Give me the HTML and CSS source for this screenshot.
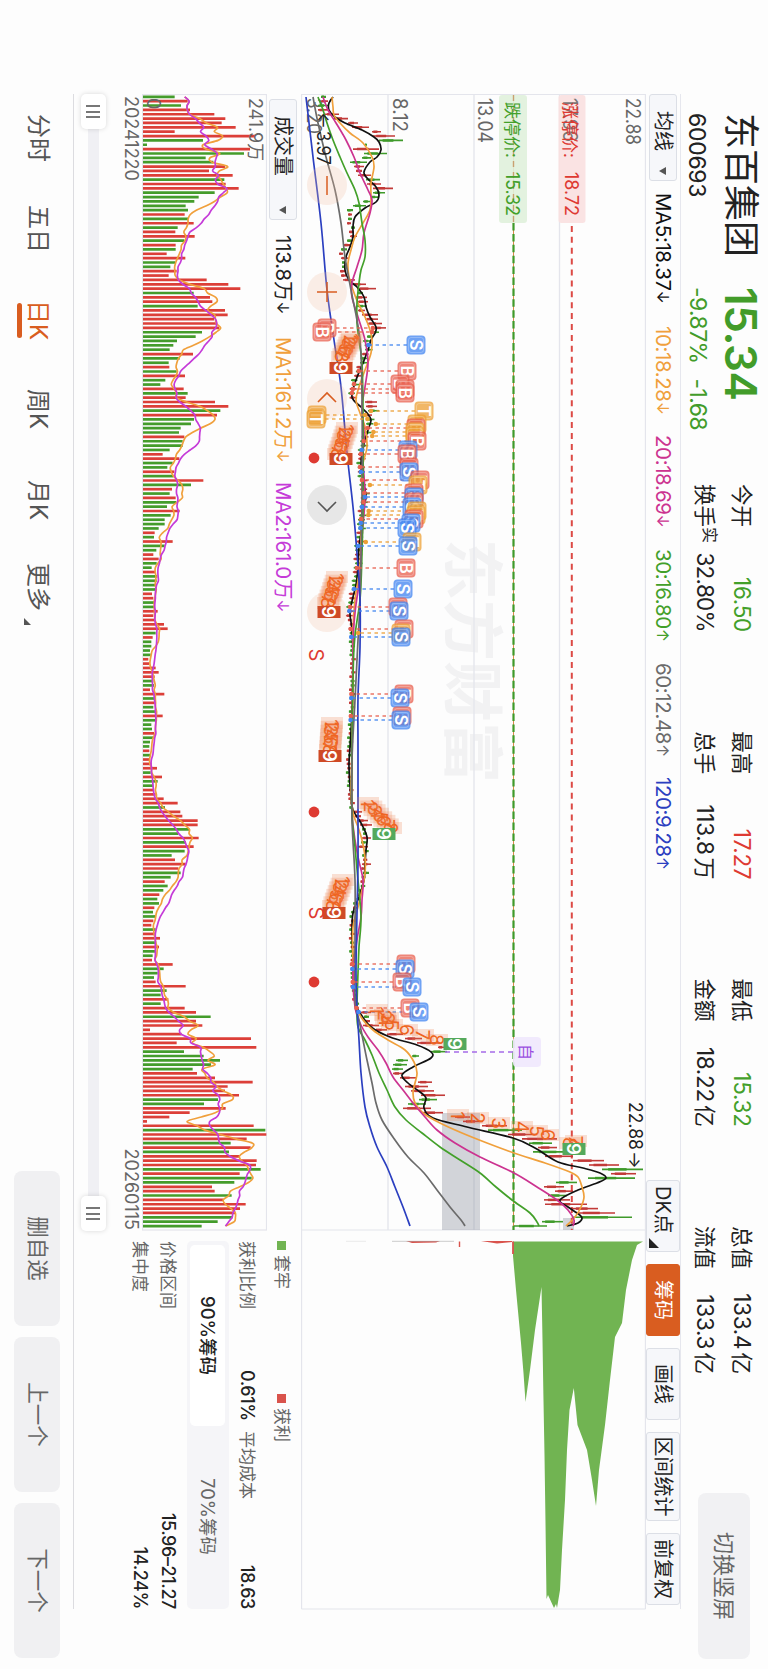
FILE: index.html
```html
<!DOCTYPE html>
<html lang="zh-CN">
<head>
  <meta charset="UTF-8" />
  <meta name="viewport" content="width=device-width, initial-scale=1.0"/>
  <title>东百集团 600693</title>
  <link rel="stylesheet" href="styles.css">
</head>
<body>
  <div class="stage">
    <header class="quote">
      <div class="name">
        <h1>东百集团</h1>
        <span class="code">600693</span>
      </div>
      <div class="price">
        <strong>15.34</strong>
        <span class="change"><i>-9.87%</i><i>-1.68</i></span>
      </div>
      <div class="stats">
        <div class="stat"><label>今开</label><b class="down">16.50</b></div>
        <div class="stat"><label>最高</label><b class="up">17.27</b></div>
        <div class="stat"><label>最低</label><b class="down">15.32</b></div>
        <div class="stat"><label>总值</label><b>133.4<i>亿</i></b></div>
        <div class="stat"><label>换手<sup>实</sup></label><b class="raised">32.80%</b></div>
        <div class="stat"><label>总手</label><b>113.8<i>万</i></b></div>
        <div class="stat"><label>金额</label><b>18.22<i>亿</i></b></div>
        <div class="stat"><label>流值</label><b>133.3<i>亿</i></b></div>
      </div>
      <button class="btn-rotate">切换竖屏</button>
    </header>

    <div class="toolbar">
      <button class="select">均线<em></em></button>
      <div class="ma-list">
        <span class="ma5">MA5:18.37<i>↓</i></span>
        <span class="ma10">10:18.28<i>↓</i></span>
        <span class="ma20">20:18.69<i>↓</i></span>
        <span class="ma30">30:16.80<i>↑</i></span>
        <span class="ma60">60:12.48<i>↑</i></span>
        <span class="ma120">120:9.28<i>↑</i></span>
      </div>
      <div class="tools">
        <button class="dk">DK点</button>
        <button class="active">筹码</button>
        <button>画线</button>
        <button class="wide">区间统计</button>
        <button>前复权</button>
      </div>
    </div>

    <svg id="kline" class="kline" viewBox="94 122 1516 345"></svg>

    <div class="lower">
      <div class="volume">
        <div class="volume-head">
          <button class="select">成交量<em></em></button>
          <span class="vol">113.8万<i>↓</i></span>
          <span class="vma1">MA1:161.2万<i>↓</i></span>
          <span class="vma2">MA2:161.0万<i>↓</i></span>
        </div>
        <svg id="vol" class="vol-chart" viewBox="94 501 1137 125"></svg>
        <div class="dates"><span>20241220</span><span>20260115</span></div>
        <div class="slider">
          <span class="handle"><i></i><i></i><i></i></span>
          <span class="handle"><i></i><i></i><i></i></span>
        </div>
      </div>

      <aside class="chips">
        <div class="legend">
          <span><i class="sq green"></i>套牢</span>
          <span><i class="sq red"></i>获利</span>
        </div>
        <div class="chip-row two">
          <label>获利比例</label><b>0.61%</b>
          <label class="second">平均成本</label><b>18.63</b>
        </div>
        <div class="segment"><span class="on">90%筹码</span><span>70%筹码</span></div>
        <div class="chip-row"><label>价格区间</label><b>15.96–21.27</b></div>
        <div class="chip-row"><label>集中度</label><b>14.24%</b></div>
      </aside>
    </div>

    <footer class="bottom">
      <nav class="tabs">
        <span>分时</span>
        <span>五日</span>
        <span class="current">日K</span>
        <span>周K</span>
        <span>月K</span>
        <span class="more">更多</span>
      </nav>
      <div class="actions">
        <button>删自选</button>
        <button>上一个</button>
        <button>下一个</button>
      </div>
    </footer>
  </div>

  <script src="script.js"></script>
</body>
</html>
```

FILE: styles.css
```css
* {
  box-sizing: border-box;
  margin: 0;
  padding: 0;
}

html, body {
  width: 768px;
  height: 1669px;
  overflow: hidden;
  background: #fdfdfd;
}

body {
  font-family: Inter, 'Noto Sans CJK SC', sans-serif;
  line-height: 1;
  color: #222;
}

/* landscape screen turned a quarter clockwise */
.stage {
  width: 1669px;
  height: 768px;
  display: flex;
  flex-direction: column;
  transform-origin: 0 0;
  transform: translateX(768px) rotate(90deg);
  white-space: nowrap;
}

button {
  font: inherit;
  color: inherit;
  border: none;
  background: none;
  line-height: 1;
  white-space: nowrap;
}

i, em {
  font-style: normal;
}

/* header */
.quote {
  height: 87px;
  display: flex;
  padding-left: 113px;
}

.name {
  width: 174px;
  padding-top: 9px;
}

h1 {
  font-size: 36px;
  font-weight: 400;
  height: 51px;
  line-height: 36px;
}

.code {
  display: block;
  font-size: 23px;
  letter-spacing: -0.3px;
}

.price {
  width: 197px;
  color: #429c2a;
  padding-top: 5px;
}

.price strong {
  display: block;
  font-size: 44px;
  font-weight: 600;
  height: 54px;
  letter-spacing: -0.4px;
}

.change {
  display: flex;
  gap: 15px;
  font-size: 23px;
  letter-spacing: -0.6px;
}

.stats {
  width: 1009px;
  display: grid;
  grid-template-columns: repeat(4, 148px);
  column-gap: 99.3px;
  grid-template-rows: 37px 37px;
  padding-top: 8px;
}

.stat {
  display: flex;
  justify-content: space-between;
  align-items: center;
  font-size: 21.5px;
}

.stat b {
  font-weight: 400;
  font-size: 22.5px;
  letter-spacing: -0.3px;
}

.stat b i {
  font-size: 22px;
  margin-left: 3px;
}

.stat b.raised {
  letter-spacing: -0.7px;
}

.stat sup {
  display: inline-block;
  font-size: 16px;
  vertical-align: 7px;
  line-height: 0;
}

.up { color: #de3a32; }
.down { color: #43a02a; }

.btn-rotate {
  width: 166px;
  height: 52px;
  margin-top: 18px;
  border-radius: 8px;
  background: #f1f1f3;
  color: #666;
  font-size: 22px;
}

/* indicator row */
.toolbar {
  height: 35px;
  width: 1515px;
  margin-left: 94px;
  border-top: 1px solid #e6e7ee;
  display: flex;
  align-items: center;
}

.select {
  display: flex;
  align-items: center;
  justify-content: space-between;
  height: 28px;
  width: 87px;
  padding: 0 5px 0 16px;
  border: 1px solid #dcdfe6;
  border-radius: 3px;
  background: #f6f7fa;
  font-size: 20px;
}

.select em {
  border: 4px solid transparent;
  border-top: 7px solid #555;
  border-bottom: none;
}

.ma-list {
  margin-left: 12px;
  flex: 1;
  display: grid;
  grid-template-columns: 133px 109px 114px 114px 114px auto;
  font-size: 20.5px;
  letter-spacing: -0.4px;
}

.ma-list i,
.volume-head i {
  font-size: 16px;
  vertical-align: 1px;
}

.ma5 { color: #111; }
.ma10 { color: #f0a03c; }
.ma20 { color: #cc3390; }
.ma30 { color: #43a02a; }
.ma60 { color: #6b6b6b; }
.ma120 { color: #2b3fc0; }

.tools {
  display: flex;
  gap: 12px;
  margin-right: 4px;
}

.tools button {
  position: relative;
  width: 72px;
  height: 34px;
  font-size: 20px;
  border: 1px solid #dcdfe6;
  border-radius: 3px;
  background: #f6f7fa;
}

.tools button.wide { width: 89px; }

.tools button.active {
  background: #d95d20;
  border-color: #d95d20;
  color: #fff;
}

.tools .dk {
  text-align: left;
  padding-left: 5px;
}

.tools .dk::after {
  content: '';
  position: absolute;
  right: 3px;
  bottom: 2px;
  border-left: 10px solid transparent;
  border-bottom: 10px solid #222;
}

.kline {
  display: block;
  width: 1516px;
  height: 345px;
  margin-left: 94px;
  flex: none;
}

/* volume + chip summary */
.lower {
  height: 228px;
  width: 1515px;
  margin-left: 94px;
  border-bottom: 1px solid #dcdce0;
  display: flex;
}

.volume { width: 1137px; }

.volume-head {
  height: 34px;
  display: flex;
  align-items: center;
  padding: 4px 0 2px 5px;
  font-size: 20.5px;
  letter-spacing: -0.2px;
}

.volume-head .select {
  width: 121px;
  padding-right: 5px;
  font-size: 20px;
  letter-spacing: 0;
}

.vol { margin-left: 15px; width: 102px; }
.vma1 { width: 145px; color: #f0a03c; }
.vma2 { color: #c53bd8; }

.vol-chart {
  display: block;
  width: 1137px;
  height: 125px;
}

.dates {
  display: flex;
  justify-content: space-between;
  font-size: 18px;
  color: #666;
  padding: 2px 1px 0 2px;
  height: 36px;
}

.slider {
  display: flex;
  justify-content: space-between;
  align-items: center;
  height: 25px;
  background: linear-gradient(#f0f0f4, #f0f0f4) 0 50% / 100% 11px no-repeat;
}

.handle {
  width: 35px;
  height: 25px;
  border-radius: 5px;
  background: #fff;
  box-shadow: 0 0 5px rgba(0, 0, 0, 0.15);
  display: flex;
  justify-content: center;
  align-items: center;
  gap: 3.5px;
}

.handle i {
  width: 2px;
  height: 14px;
  background: #777;
}

.chips {
  width: 378px;
  padding-left: 10px;
  font-size: 17px;
  color: #666;
}

.legend {
  display: flex;
  align-items: center;
  margin-top: 9px;
  height: 20px;
}

.legend span {
  display: flex;
  align-items: center;
  gap: 5px;
  width: 153px;
}

.sq {
  width: 9px;
  height: 9px;
}

.sq.green { background: #71b452; }
.sq.red { background: #d9534c; }

.chip-row {
  display: flex;
  justify-content: space-between;
  align-items: center;
  height: 28px;
}

.chip-row b {
  color: #222;
  font-weight: 500;
  font-size: 18px;
  letter-spacing: -0.4px;
}

.chip-row.two {
  height: 20px;
  margin: 15px 0 8px;
  display: grid;
  grid-template-columns: 129px 61px auto 1fr;
}

.chip-row.two b:last-child { text-align: right; }

.segment {
  display: flex;
  height: 42px;
  padding: 4px 2px 3px 4px;
  margin-bottom: 5px;
  border-radius: 5px;
  background: #f5f5f8;
  font-size: 18.5px;
}

.segment span {
  flex: 1;
  display: flex;
  align-items: center;
  justify-content: center;
}

.segment .on {
  background: #fff;
  color: #222;
  font-weight: 500;
  border-radius: 5px;
}

/* period tabs */
.bottom {
  height: 73px;
  display: flex;
  padding: 13px 11px 0 114px;
  justify-content: space-between;
}

.tabs {
  display: grid;
  grid-template-columns: 91px 95px 89px 91px 83px auto;
  font-size: 24px;
  line-height: 44px;
  height: 46px;
  color: #555;
}

.tabs span { position: relative; }

.tabs .current { color: #d95d20; }

.tabs .current::after {
  content: '';
  position: absolute;
  left: 3px;
  bottom: 3px;
  width: 35px;
  height: 5px;
  border-radius: 3px;
  background: #d95d20;
}

.tabs .more::after {
  content: '';
  position: absolute;
  right: -14px;
  bottom: 10px;
  border-left: 7px solid transparent;
  border-bottom: 7px solid #555;
}

.actions {
  display: flex;
  gap: 11px;
}

.actions button {
  width: 155px;
  height: 46px;
  border-radius: 8px;
  background: #f0f0f2;
  color: #666;
  font-size: 21.5px;
}
```

FILE: script.js
```js
const X0 = 96.8;      // centre of the first bar
const STEP = 4.36;    // distance between bars
const RED = '#c23a38';
const GREEN = '#3f9a2a';

// price level in px above the bottom edge of the screen -> svg y
const Y = v => 768 - v;
const barX = i => X0 + i * STEP;

// volume per day, g = falling day, r = rising day
const volumes = (
  '134g 173r 153g 180r 253r 286r 275r 317r 134r 375r 219g 51g 360r 342g 227g 250g 285r 237r 308r 283g 287r 326r 254g 206g 193g 167g 174g 164r 174g 191r ' +
  '143g 136r 194r 163g 137r 137g 110r 166r 136g 121g 140r 116r 230r 295r 331r 191g 240r 247r 203g 285r 293r 252r 262r 268r 216g 197g 141g 130g 119g 189r ' +
  '149g 116g 118r 140g 165r 106g 91g 161r 173g 167r 255r 295r 271g 261r 192g 183g 152g 147g 163r 158g 158g 119g 98r 148r 128g 112g 133r 130g 220r 183g ' +
  '126r 119g 137r 139g 111g 149r 122g 104g 104g 86g 74r 72g 128r 104g 79g 70r 86r 80g 65g 77r 82g 80g 75g 80g 66r 70r 72g 75g 83r 70r 75r ' +
  '102r 113r 77g 68r 64g 64g 60g 62g 55r 58r 77r 86r 74r 70g 72g 60r 103r 75g 74r 70g 77g 98r 76g 64g 66g 72r 70g 60g 58g 58r 60g 58r 65r 81r 62g 96r 83g 70g 70r 77r ' +
  '101r 143r 105g 151r 157r 203r 203r 178g 145g 206r 167g 191r 164g 125g 135r 167r 145r 152g 122g 104r 113g 100g 88r 82g 87g 73r 69g 75g 70r 64r 77g 75r 90r 79g 87r 75g 68g 66r 128r 101g ' +
  '83g 72g 77r 167r 110g 92g 115r 92g 164r 198r 242g 198r 217r 60r 155r 363r 140r 379r 162g 221g 270g 243g 188g 201r 255r 368r 293r 285r 327r 264g 222g 287r 179r 118r 51r 371r 406g 409r 350r 302g ' +
  '362r 297g 330r 380r 378r 392g 329r 365g 313g 246r 254r 305g 280r 347r 330r 317r 307g 263g 215g'
).split(' ').map(s => ({ h: (parseInt(s) - 39) / 3, up: s.endsWith('r') }));

// low / high of each day; the flat middle part follows the 5 day line
const ranges = {
  0: [321, 326], 1: [321, 328], 2: [318, 328], 3: [318, 328], 4: [325, 339], 5: [333, 348], 6: [348, 358], 7: [352, 369],
  8: [372, 381], 9: [373, 395], 10: [379, 403], 11: [365, 367], 12: [353, 379], 13: [364, 387], 14: [362, 371], 15: [350, 367],
  16: [354, 364], 17: [356, 362], 18: [358, 371], 19: [366, 380], 20: [367, 381], 21: [373, 393], 22: [373, 385], 23: [371, 378],
  24: [363, 371], 25: [353, 366], 26: [347, 353], 27: [348, 352], 28: [348, 352], 29: [347, 351], 30: [351, 355], 31: [349, 354],
  32: [350, 357], 33: [347, 353], 34: [344, 350], 35: [341, 347], 36: [339, 343], 37: [341, 348], 38: [342, 345], 39: [342, 345],
  40: [340, 345], 41: [341, 346], 42: [343, 355], 43: [352, 366], 44: [357, 376], 45: [358, 363], 46: [355, 367], 47: [357, 368],
  48: [357, 367], 49: [358, 365], 50: [362, 378], 51: [365, 378], 52: [367, 382], 53: [373, 386], 54: [372, 379], 55: [367, 373],
  56: [363, 371], 70: [365, 377], 71: [366, 377], 72: [368, 379], 73: [365, 372],
  164: [353, 362], 165: [355, 361], 166: [357, 368], 167: [360, 372], 168: [362, 366], 169: [363, 367], 170: [362, 371],
  171: [361, 367], 172: [358, 368], 176: [362, 371], 178: [363, 369],
  210: [361, 371], 211: [364, 369], 212: [364, 370], 213: [363, 379], 214: [374, 387], 215: [387, 403], 216: [405, 422],
  217: [417, 440], 218: [438, 445], 219: [431, 447], 220: [412, 419], 221: [396, 408], 222: [393, 407], 223: [392, 403],
  224: [393, 403], 225: [400, 416], 226: [418, 432], 227: [405, 428], 228: [411, 434], 229: [421, 445], 230: [419, 437],
  231: [408, 426], 232: [403, 431], 233: [423, 443], 234: [455, 470], 235: [463, 483], 236: [482, 507], 237: [488, 522],
  238: [508, 537], 239: [522, 557], 240: [529, 552], 241: [538, 557], 242: [533, 572], 243: [545, 573], 244: [573, 604],
  245: [589, 619], 246: [602, 643], 247: [611, 636], 248: [588, 635], 249: [556, 577], 250: [544, 564], 251: [555, 573],
  252: [548, 567], 253: [544, 570], 254: [545, 587], 255: [572, 598], 256: [577, 615], 257: [572, 632], 258: [542, 563], 259: [514, 547]
};

// moving averages as [x, level] knots
const ma5 = [[97,333],[103,329],[110,329],[117,335],[123,345],[130,362],[137,374],[142,379],[150,381],[157,377],[162,370],[172,364],[178,367],[187,376],[195,379],[202,376],[208,365],[217,355],[227,353],[237,353],[247,350],[257,346],[270,345],[280,349],[287,357],[297,364],[307,366],[317,370],[327,376],[333,375],[340,371],[350,368],[363,363],[380,356],[397,352],[407,361],[413,367],[420,371],[430,368],[440,365],[453,362],[467,361],[480,363],[497,366],[507,363],[520,362],[533,361],[547,359],[567,358],[585,356],[597,353],[613,350],[630,352],[663,353],[713,352],[747,350],[767,349],[797,351],[810,353],[823,361],[837,367],[850,366],[863,365],[880,364],[897,359],[913,353],[933,352],[960,353],[990,354],[1007,357],[1013,360],[1027,371],[1037,390],[1045,417],[1052,431],[1058,431],[1067,413],[1075,402],[1083,408],[1092,420],[1098,426],[1108,424],[1118,433],[1127,467],[1138,513],[1148,535],[1162,558],[1168,583],[1173,600],[1178,606],[1183,597],[1190,578],[1200,560],[1207,568],[1213,577],[1218,582],[1223,578],[1226,567]];
const ma10 = [[97,332],[107,333],[115,334],[123,340],[133,350],[143,363],[157,372],[167,374],[183,371],[197,371],[210,370],[223,363],[237,355],[250,351],[263,348],[277,349],[290,353],[303,358],[317,365],[330,370],[340,372],[353,371],[370,365],[387,359],[400,356],[413,360],[427,365],[447,367],[463,363],[480,362],[507,363],[537,361],[567,360],[600,355],[630,353],[680,353],[747,352],[793,351],[813,353],[827,358],[840,362],[857,365],[873,365],[890,362],[907,358],[927,353],[960,353],[1000,355],[1017,361],[1030,373],[1040,388],[1050,405],[1062,414],[1073,417],[1083,415],[1093,413],[1103,415],[1113,423],[1123,440],[1133,462],[1143,487],[1153,514],[1163,545],[1172,570],[1177,578],[1187,582],[1197,584],[1207,581],[1217,575],[1226,566]];
const ma20 = [[97,323],[110,328],[123,336],[140,346],[157,354],[173,360],[190,368],[200,372],[213,370],[233,364],[250,362],[267,357],[283,352],[297,352],[317,358],[340,365],[363,368],[387,365],[407,362],[433,364],[460,363],[497,365],[537,362],[575,360],[613,355],[647,353],[747,352],[810,352],[833,354],[857,358],[880,363],[900,362],[917,361],[940,357],[973,353],[1007,355],[1023,360],[1037,368],[1050,378],[1063,386],[1077,393],[1090,403],[1103,413],[1117,425],[1130,437],[1143,455],[1157,480],[1173,514],[1187,537],[1200,557],[1210,568],[1220,574],[1226,573]];
const ma30 = [[97,318],[110,323],[123,327],[140,333],[157,340],[173,347],[190,355],[203,359],[223,362],[240,365],[257,365],[270,361],[283,359],[303,357],[323,357],[340,359],[363,362],[407,363],[453,363],[507,363],[553,362],[600,360],[647,354],[747,352],[813,352],[847,355],[880,358],[917,361],[947,359],[973,358],[1007,357],[1027,358],[1040,365],[1055,372],[1073,379],[1090,387],[1107,395],[1120,406],[1133,422],[1147,440],[1160,460],[1173,480],[1187,496],[1200,512],[1213,530],[1222,537],[1226,539]];
const ma60 = [[97,313],[123,318],[157,326],[190,335],[223,341],[257,345],[290,351],[340,360],[400,362],[500,362],[600,360],[640,358],[700,355],[760,352],[820,352],[880,355],[940,355],[1000,355],[1020,359],[1040,363],[1060,367],[1083,372],[1103,376],[1120,382],[1140,395],[1157,408],[1173,424],[1190,437],[1207,450],[1220,461],[1226,465]];
const ma120 = [[97,306],[157,313],[223,321],[290,327],[340,334],[387,341],[453,347],[507,353],[553,357],[600,360],[647,360],[697,358],[747,358],[813,358],[863,358],[913,357],[973,356],[1007,357],[1040,359],[1073,361],[1107,365],[1127,370],[1147,377],[1167,387],[1187,395],[1207,403],[1226,410]];

function smooth(pts) {
  let d = `M${pts[0][0]} ${Y(pts[0][1])}`;
  for (let i = 0; i < pts.length - 1; i++) {
    const p0 = pts[i - 1] || pts[i], p1 = pts[i], p2 = pts[i + 1], p3 = pts[i + 2] || p2;
    d += `C${p1[0] + (p2[0] - p0[0]) / 6} ${Y(p1[1] + (p2[1] - p0[1]) / 6)} ` +
         `${p2[0] - (p3[0] - p1[0]) / 6} ${Y(p2[1] - (p3[1] - p1[1]) / 6)} ${p2[0]} ${Y(p2[1])}`;
  }
  return d;
}

function levelAt(pts, x) {
  for (let i = 1; i < pts.length; i++) {
    if (x <= pts[i][0]) {
      const [ax, av] = pts[i - 1], [bx, bv] = pts[i];
      return av + (bv - av) * (x - ax) / (bx - ax);
    }
  }
  return pts[pts.length - 1][1];
}

const line = (x1, v1, x2, v2, color, w = 1, extra = '') =>
  `<line x1="${x1}" y1="${Y(v1)}" x2="${x2}" y2="${Y(v2)}" stroke="${color}" stroke-width="${w}" ${extra}/>`;
const box = (x, v, w, h, color, extra = '') =>
  `<rect x="${x}" y="${Y(v) - h}" width="${w}" height="${h}" fill="${color}" ${extra}/>`;
const text = (x, v, s, color, size, len, extra = '') =>
  `<text x="${x}" y="${Y(v)}" fill="${color}" font-size="${size}" ${len ? `textLength="${len}" lengthAdjust="spacingAndGlyphs"` : ''} ${extra}>${s}</text>`;
const path = (pts, color) => `<path d="${smooth(pts)}" fill="none" stroke="${color}" stroke-width="1.7"/>`;

function drawKline() {
  let s = '';

  // watermark and frame
  s += text(539, 450, '东方财富', '#f2f2f3', 61, 244, 'font-weight="700"');
  [301.5, 388, 474, 559.5, 645.5].forEach(v => s += line(94, v, v === 301.5 || v === 645.5 ? 1609 : 1230, v, '#e4e5ec', 1.3));
  [94.5, 1230, 1609].forEach(x => s += line(x, 301.5, x, 645.5, '#e4e5ec', 1.2));

  s += box(1113, 442, 117, 38, 'rgba(125,130,145,.33)');
  s += box(1218, 563, 12, 11, 'rgba(125,130,145,.33)');

  // limit prices
  s += line(95, 513.5, 1230, 513.5, '#d98a4a', 1);
  s += line(223, 513.5, 1230, 513.5, GREEN, 2.2, 'stroke-dasharray="7.5 3.4"');
  s += line(223, 571.8, 1230, 571.8, '#dc4a45', 2, 'stroke-dasharray="6 4.9" stroke-dashoffset="8"');
  s += box(95, 499, 128, 28, 'rgba(224,241,219,.9)', 'rx="3"');
  s += box(95, 558.5, 128, 27, 'rgba(250,224,224,.9)', 'rx="3"');
  s += line(95, 513.5, 223, 513.5, '#c9a070', 1.4, 'stroke-dasharray="6 5"');

  // axis labels
  s += text(98, 626, '22.88', '#666', 19.5, 47);
  s += text(98, 563, '17.96', '#777', 19.5, 44);
  s += text(98, 478, '13.04', '#666', 19.5, 45);
  s += text(98, 393, '8.12', '#666', 19.5, 34);
  s += text(98, 307, '3.20', '#666', 19.5, 36);

  s += text(102, 505.5, '跌停价:', '#43a02a', 17, 56);
  s += text(172, 506, '15.32', '#43a02a', 19, 44);
  s += text(102, 564, '涨停价:', '#de3a32', 17, 56);
  s += text(172, 564.5, '18.72', '#de3a32', 19, 44);

  // candles
  volumes.forEach((d, i) => {
    let r = ranges[i];
    if (!r) {
      const m = levelAt(ma5, barX(i)), n = Math.sin(i * 2.3);
      const wild = i < 120 ? 1.5 : 0;
      r = [m - 2.5 + n - wild, m + 1.5 + n * 1.5 + wild];
    }
    const color = d.up ? RED : GREEN;
    const span = r[1] - r[0];
    s += line(barX(i), r[0], barX(i), r[1], color, span > 6 ? 1.6 : 2.2);
    s += line(barX(i), r[0] + span * 0.15, barX(i), r[0] + span * 0.6, color, 2.5);
  });

  s += path(ma5, '#111') + path(ma10, '#f0a03c') + path(ma20, '#cc3390') +
       path(ma30, '#43a02a') + path(ma60, '#6b6b6b') + path(ma120, '#2b3fc0');

  // extremes
  s += text(112, 318, '←', '#222', 17, 17) + text(131, 317, '3.97', '#222', 18.5, 34);
  s += text(1102, 628.5, '22.88', '#222', 18.5, 48) + text(1151, 629, '→', '#222', 17, 18);

  // floating chart controls
  [185, 292, 399, 612].forEach(x => s += `<circle cx="${x}" cy="${Y(327)}" r="20" fill="rgba(245,190,165,.25)"/>`);
  s += `<circle cx="505" cy="${Y(327)}" r="20" fill="rgba(205,205,205,.45)"/>`;
  s += line(176, 327, 195, 327, '#d95d20', 1.5);
  s += line(282, 327, 302, 327, '#d95d20', 1.5) + line(292, 317, 292, 337, '#d95d20', 1.5);
  s += `<path d="M402 ${Y(336)}L393 ${Y(327)}L402 ${Y(318)}" fill="none" stroke="#d95d20" stroke-width="1.6"/>`;
  s += `<path d="M502 ${Y(336)}L511 ${Y(327)}L502 ${Y(318)}" fill="none" stroke="#555" stroke-width="1.6"/>`;

  // buy / sell / both markers
  const colors = { B: '#e8604f', S: '#4285f0', T: '#eda036' };
  const marks = [
    [328,327,'B'],[332,322,'B'],[345,416,'S'],[371,407,'B'],[384,400,'B'],[389,405,'B'],[393,405,'B'],[411,424,'T'],
    [415,317,'T'],[419,316,'T'],[424,417,'T'],[428,416,'B'],[432,415,'T'],[436,415,'T'],[441,417,'B'],[450,408,'S'],[454,407,'B'],
    [467,409,'B'],[472,409,'S'],[480,420,'B'],[485,418,'T'],[493,414,'B'],[497,414,'S'],[502,414,'B'],[507,412,'S'],
    [511,417,'T'],[515,416,'T'],[519,414,'B'],[523,411,'S'],[528,407,'S'],[542,412,'T'],[546,408,'S'],[568,406,'B'],[589,403,'S'],
    [607,398,'B'],[611,399,'S'],[629,404,'B'],[633,401,'T'],[637,401,'S'],[694,404,'B'],[698,400,'S'],[716,402,'B'],[720,401,'S'],
    [964,406,'B'],[969,405,'S'],[982,402,'B'],[987,412,'S'],[1008,410,'B'],[1012,419,'S']
  ];
  marks.forEach(([x, v, t]) => {
    const c = colors[t];
    const end = levelAt(ma5, x) + (v < 340 ? -3 : t === 'T' ? 6 : -1);
    s += line(x, v + (v < 340 ? 9 : -9), x, end, c, 1.3, 'stroke-dasharray="3.5 3.5" opacity=".85"');
    s += `<circle cx="${x}" cy="${Y(end)}" r="2.3" fill="${c}"/>`;
  });
  marks.forEach(([x, v, t]) => {
    const c = colors[t];
    s += box(x - 9.5, v - 9.5, 19, 19, c, 'rx="4" opacity=".76"');
    s += box(x - 7.5, v - 7.5, 15, 15, 'none', 'rx="2.5" stroke="#fff" stroke-opacity=".25"');
    s += text(x, v - 6, t, '#fff', 17, 0, 'font-weight="600" text-anchor="middle"');
  });

  // nine-turn counters
  const digit = (x, v, n) => {
    s += box(x - 6, v - 11, 12, 22, 'rgba(240,130,80,.24)');
    s += text(x, v - 7, n, '#ef6420', 19, 0, 'text-anchor="middle"');
  };
  [[337,352,357,342],[428,347,454,338],[577,337,603,328],[723,332,750,330],[803,368,828,391],[880,343,906,333]].forEach(([x1, v1, x2, v2]) => {
    for (let n = 0; n < 8; n++) digit(x1 + (x2 - x1) * n / 7, v1 + (v2 - v1) * n / 7, n + 1);
  });
  [[1010,377],[1015,385],[1018,388],[1021,386],[1025,392],[1030,407],[1035,423],[1040,437]].forEach((p, i) => digit(p[0], p[1], i + 1));
  [[1115,458],[1118,478],[1123,499],[1127,522],[1131,537],[1135,548],[1141,576],[1143,570]].forEach((p, i) => digit(p[0], p[1], i + 1));
  [[368,341,1],[459,341,1],[612,329,1],[756,330,1],[913,334,1],[834,384],[1044,455],[1149,574]].forEach(([x, v, low]) => {
    s += box(x - 6, v - 11.5, 12, 23, low ? '#cf4a25' : '#54a95c');
    s += text(x, v - 7, '9', '#fff', 18.5, 0, 'font-weight="600" text-anchor="middle"');
  });

  [458, 812, 982].forEach(x => s += `<circle cx="${x}" cy="${Y(314)}" r="5.4" fill="#de3a32"/>`);
  s += text(655, 309, 'S', '#de3a32', 20, 0, 'text-anchor="middle"');
  s += text(913, 309, 'S', '#de3a32', 20, 0, 'text-anchor="middle"');

  // watch-list date
  s += line(1052, 445, 1052, 513, '#a56be8', 1.4, 'stroke-dasharray="5 4"');
  s += box(1037, 513, 30, 28, 'rgba(240,232,253,.92)', 'rx="4"');
  s += text(1052, 519.5, '自', '#9a4fe0', 16, 0, 'text-anchor="middle"');

  // chip distribution
  const chips = [[1241.5,513],[1256,513],[1290,516],[1343,521],[1373,523.5],[1402,525.5],[1370,530],[1330,535],[1287,541.5],[1340,542.5],[1390,543.3],[1455,544.5],[1523,545.5],[1599,546.5],[1595,548],[1608,554],[1604,556],[1608,557],[1590,560],[1550,562],[1500,565],[1450,567],[1410,569.5],[1388,573.8],[1425,577.5],[1450,587],[1480,592],[1506,596],[1470,599],[1425,605],[1380,610],[1337,615],[1323,622],[1290,626],[1260,632],[1245,637],[1241.5,643]];
  s += `<polygon fill="#71b452" points="${chips.map(p => p[0] + ',' + Y(p[1])).join(' ')}"/>`;
  s += line(1241.5, 513, 1254, 513, '#d9534c', 1.8) + line(1241.5, 459.5, 1247, 459.5, '#d9534c', 1.4);
  s += `<path d="M1241 ${Y(406)}L1243 ${Y(412)}L1242.5 ${Y(436)}L1241 ${Y(440)}Z M1241 ${Y(481)}L1243.5 ${Y(497)}L1242 ${Y(512)}L1241 ${Y(512)}Z" fill="#d9534c"/>`;
  s += line(1241.3, 346, 1241.3, 366, '#ddd', 0.6) + line(1241.3, 392, 1241.3, 454, '#aaa', 0.6);

  document.getElementById('kline').innerHTML = s;
}

function drawVolume() {
  let s = '';
  s += box(94.5, 142.5, 1135.5, 124, 'none', 'stroke="#e4e5ec" stroke-width="1.2"');

  volumes.forEach((d, i) => s += line(barX(i), 143, barX(i), 143 + d.h, d.up ? '#dc3f38' : '#449c2b', 2.7));
  s += text(98, 249, '241.9万', '#666', 18, 63);
  s += text(98, 147, '0', '#666', 18);

  const average = n => volumes.map((d, i) => {
    const part = volumes.slice(Math.max(0, i - n + 1), i + 1);
    return [barX(i), 143 + part.reduce((a, b) => a + b.h, 0) / part.length + (i < 4 ? 10 - i * 2 : 0)];
  });
  s += path(average(5), '#f0a03c') + path(average(10), '#c53bd8');

  document.getElementById('vol').innerHTML = s;
}

drawKline();
drawVolume();
```
